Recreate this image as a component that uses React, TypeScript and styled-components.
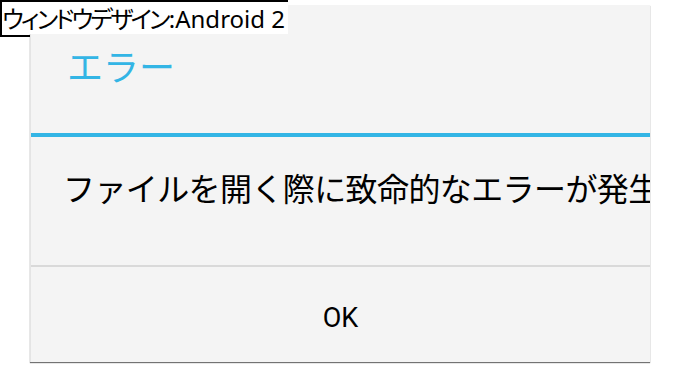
import styled, { createGlobalStyle } from 'styled-components'

const GlobalStyle = createGlobalStyle`
  html, body {
    margin: 0;
    padding: 0;
    background: #ffffff;
    font-family: "Noto Sans", "Noto Sans CJK JP", sans-serif;
  }
`

const Stage = styled.div`
  position: relative;
  width: 680px;
  height: 368px;
  padding: 5px 30px 0;
  box-sizing: border-box;
`

const CaptionFrame = styled.div`
  position: absolute;
  left: 0;
  top: 0;
  width: 288px;
  height: 37px;
  box-sizing: border-box;
  border: 2px solid #000;
  z-index: 0;
`

const Caption = styled.div`
  position: absolute;
  left: 2px;
  top: 2px;
  width: 286px;
  height: 32px;
  background: #ffffff;
  color: #000;
  font-family: "Noto Sans", "Noto Sans CJK JP", sans-serif;
  font-size: 24px;
  line-height: 32px;
  white-space: nowrap;
  z-index: 2;
`

const Kana = styled.span`
  font-family: "Noto Sans CJK JP", sans-serif;
  font-feature-settings: "palt";
  letter-spacing: -2.7px;
  margin-right: 1px;
`

const Dialog = styled.div`
  position: relative;
  z-index: 1;
  width: 620px;
  height: 357px;
  display: flex;
  flex-direction: column;
  background: #f4f4f4;
  border-left: 1px solid #e4e4e4;
  box-shadow: 0 1px 1px rgba(0, 0, 0, 0.55);
  box-sizing: border-box;
`

const TitleArea = styled.div`
  height: 128px;
  padding: 36px 0 0 36px;
  box-sizing: border-box;
`

const Title = styled.h1`
  margin: 0;
  color: #33b5e5;
  font-family: "Noto Sans CJK JP", sans-serif;
  font-weight: 400;
  font-size: 36px;
  line-height: 48px;
`

const Divider = styled.div<{ $color: string; $size: number }>`
  height: ${(p) => p.$size}px;
  background: ${(p) => p.$color};
  flex-shrink: 0;
`

const MessageArea = styled.div`
  height: 128px;
  padding: 28px 0 0 32px;
  box-sizing: border-box;
  overflow: hidden;
`

const Message = styled.p`
  margin: 0;
  color: #000;
  font-family: "Noto Sans CJK JP", sans-serif;
  font-size: 32px;
  letter-spacing: -0.6px;
  line-height: 44px;
  white-space: nowrap;
`

const ButtonBar = styled.div`
  flex: 1;
  display: flex;
`

const Button = styled.button`
  flex: 1;
  border: none;
  background: transparent;
  padding: 6px 0 0;
  color: #000;
  font-family: Roboto, "Noto Sans", sans-serif;
  font-size: 27px;
  cursor: pointer;
`

export default function App() {
  return (
    <>
      <GlobalStyle />
      <Stage>
        <CaptionFrame />
        <Caption>
          <Kana>ウィンドウデザイン</Kana>:Android 2
        </Caption>
        <Dialog>
          <TitleArea>
            <Title>エラー</Title>
          </TitleArea>
          <Divider $color="#33b5e5" $size={4} />
          <MessageArea>
            <Message>ファイルを開く際に致命的なエラーが発生しました。</Message>
          </MessageArea>
          <Divider $color="#d9d9d9" $size={2} />
          <ButtonBar>
            <Button>OK</Button>
          </ButtonBar>
        </Dialog>
      </Stage>
    </>
  )
}
